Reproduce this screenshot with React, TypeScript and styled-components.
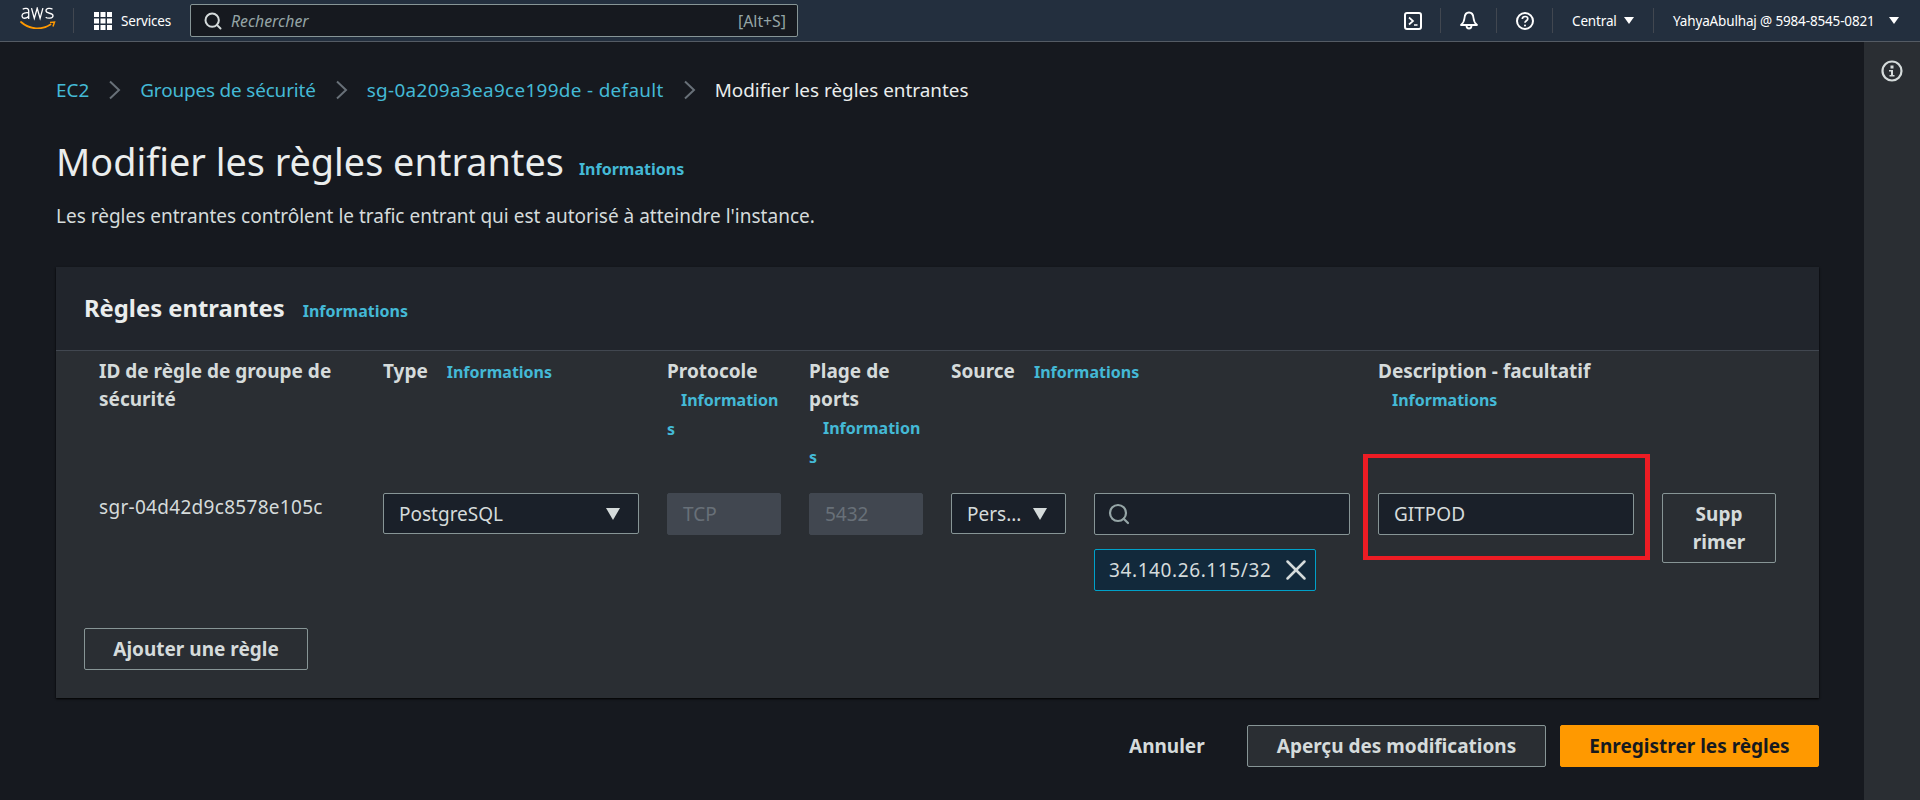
import React from 'react';
import styled, { createGlobalStyle } from 'styled-components';
import { Search, X } from 'lucide-react';

const GlobalStyle = createGlobalStyle`
  html, body {
    margin: 0;
    padding: 0;
    background: #16191f;
    color: #eaeded;
    font-family: "Noto Sans", "Liberation Sans", sans-serif;
  }
  * { box-sizing: border-box; }
`;

//Top navigation
const Nav = styled.header`
  display: flex;
  align-items: center;
  height: 42px;
  background: #232f3e;
  border-bottom: 1px solid #545b64;
  color: #fff;
`;

const LogoSlot = styled.div`
  display: flex;
  align-items: center;
  width: 74px;
  height: 25px;
  padding: 0 0 5px 20px;
  border-right: 1px solid #414750;
`;

const ServicesButton = styled.div`
  display: flex;
  align-items: center;
  gap: 9px;
  width: 116px;
  padding-left: 20px;
  font-size: 13.5px;
  letter-spacing: -0.2px;
`;

const SearchBar = styled.div`
  display: flex;
  align-items: center;
  width: 608px;
  height: 33px;
  padding: 0 11px 0 12px;
  background: #16191f;
  border: 1px solid #879596;
  border-radius: 2px;
  font-size: 15.8px;
  color: #95a5a6;
`;

const SearchHint = styled.span`
  flex: 1;
  margin-left: 8px;
  font-style: italic;
`;

const NavRight = styled.div`
  display: flex;
  align-items: center;
  height: 25px;
  margin-left: auto;
`;

const NavIcon = styled.div`
  display: flex;
  align-items: center;
  justify-content: center;
  width: 56px;
  height: 25px;
  border-right: 1px solid #414750;
`;

const NavMenu = styled.div<{ $width: number }>`
  display: flex;
  align-items: center;
  justify-content: space-between;
  width: ${(p) => p.$width}px;
  height: 25px;
  padding: 0 21px 0 19px;
  font-size: 13.5px;
  letter-spacing: -0.15px;
  white-space: nowrap;
  border-right: ${(p) => (p.$width < 150 ? '1px solid #414750' : 'none')};
`;

const Caret = styled.span`
  width: 0;
  height: 0;
  margin-left: 7px;
  border-left: 5px solid transparent;
  border-right: 5px solid transparent;
  border-top: 7px solid #fff;
`;

//Page shell
const Shell = styled.div`
  display: flex;
  height: 758px;
  overflow: hidden;
`;

const Main = styled.main`
  flex: 1;
  min-width: 0;
  padding: 0 45px 0 56px;
`;

const SidePanel = styled.aside`
  display: flex;
  justify-content: center;
  width: 56px;
  padding-top: 18px;
  background: #2a2e33;
`;

const Breadcrumbs = styled.nav`
  display: flex;
  align-items: center;
  gap: 19px;
  height: 24px;
  margin-top: 36px;
  font-size: 18.9px;
`;

const Crumb = styled.a<{ $current?: boolean; $spacing?: number }>`
  color: ${(p) => (p.$current ? '#eaeded' : '#44b9d6')};
  letter-spacing: ${(p) => p.$spacing ?? 0}px;
  white-space: nowrap;
`;

const TitleRow = styled.div`
  display: flex;
  align-items: center;
  gap: 15px;
  margin-top: 38px;
`;

const Title = styled.h1`
  margin: 0;
  font-size: 37.8px;
  line-height: 44px;
  font-weight: 400;
  color: #eaeded;
`;

const InfoLink = styled.a`
  font-size: 16px;
  font-weight: 700;
  color: #44b9d6;
`;

const TitleInfo = styled(InfoLink)`
  padding-top: 13px;
`;

const Intro = styled.p`
  margin: 20px 0 0;
  font-size: 19px;
  line-height: 25px;
  color: #d5dbdb;
`;

//Rules card
const Card = styled.section`
  height: 431px;
  margin-top: 38px;
  background: #2a2e33;
  box-shadow: 0 1px 2px #000;
`;

const CardHeader = styled.div`
  display: flex;
  align-items: baseline;
  gap: 18px;
  height: 84px;
  padding: 26px 28px 0;
  background: #21252c;
  border-bottom: 1px solid #414750;
`;

const CardTitle = styled.h2`
  margin: 0;
  font-size: 23.8px;
  line-height: 30px;
  font-weight: 700;
  color: #eaeded;
`;

const RulesGrid = styled.div`
  display: grid;
  grid-template-columns: 256px 256px 114px 114px 115px 256px 256px 114px;
  column-gap: 28px;
  padding: 6px 43px 0;
`;

const HeadCell = styled.div<{ $span?: number }>`
  grid-column: span ${(p) => p.$span ?? 1};
  min-height: 113px;
  font-size: 19px;
  line-height: 28px;
  font-weight: 700;
  color: #d5dbdb;
  overflow-wrap: anywhere;
`;

const HeadInfo = styled(InfoLink)`
  margin-left: 14px;
`;

const Cell = styled.div`
  position: relative;
  margin-top: 22px;
`;

const RuleId = styled.div`
  padding-top: 2px;
  font-size: 19px;
  line-height: 24px;
  letter-spacing: 0.3px;
  color: #d5dbdb;
`;

const Field = styled.div<{ $disabled?: boolean; $height?: number }>`
  display: flex;
  align-items: center;
  height: ${(p) => p.$height ?? 42}px;
  padding: 0 18px 0 15px;
  font-size: 19px;
  background: ${(p) => (p.$disabled ? '#414750' : '#1a2029')};
  border: 1px solid ${(p) => (p.$disabled ? '#414750' : '#879596')};
  border-radius: 2px;
  color: ${(p) => (p.$disabled ? '#687078' : '#d5dbdb')};
`;

const SelectText = styled.span`
  flex: 1;
  min-width: 0;
`;

const SelectCaret = styled.span`
  flex: none;
  width: 0;
  height: 0;
  border-left: 7px solid transparent;
  border-right: 7px solid transparent;
  border-top: 12px solid #d5dbdb;
`;

const SearchField = styled(Field)`
  padding-left: 12px;
`;

const Token = styled.div`
  display: flex;
  align-items: center;
  justify-content: space-between;
  width: 222px;
  height: 42px;
  margin-top: 14px;
  padding: 0 2px 0 14px;
  font-size: 19px;
  letter-spacing: 0.6px;
  white-space: nowrap;
  color: #d5dbdb;
  background: #12293b;
  border: 1px solid #00a1c9;
  border-radius: 2px;
`;

const RemoveButton = styled.button`
  display: block;
  width: 114px;
  height: 70px;
  padding: 0 12px;
  font: 700 19px/28px "Noto Sans", sans-serif;
  color: #d5dbdb;
  background: transparent;
  border: 1px solid #879596;
  border-radius: 2px;
`;

const Highlight = styled.div`
  position: absolute;
  top: -39px;
  left: -15px;
  width: 287px;
  height: 106px;
  border-style: solid;
  border-color: #ed1c24;
  border-width: 4px 5px;
  pointer-events: none;
`;

const Button = styled.button<{ $variant?: 'primary' | 'link' }>`
  height: 42px;
  padding: 0;
  font: 700 19px "Noto Sans", sans-serif;
  white-space: nowrap;
  color: ${(p) => (p.$variant === 'primary' ? '#16191f' : '#d5dbdb')};
  background: ${(p) =>
    p.$variant === 'primary' ? '#ff9900' : p.$variant === 'link' ? 'transparent' : '#2a2e33'};
  border: 1px solid
    ${(p) => (p.$variant === 'primary' ? '#ff9900' : p.$variant === 'link' ? 'transparent' : '#879596')};
  border-radius: 2px;
`;

const AddRule = styled(Button)`
  display: block;
  width: 224px;
  margin: 0;
  background: transparent;
`;

const AddRuleRow = styled.div`
  padding: 37px 28px 0;
`;

const Footer = styled.div`
  display: flex;
  justify-content: flex-end;
  align-items: center;
  margin-top: 27px;
`;

const CancelButton = styled(Button)`
  width: 75px;
  margin-right: 44px;
`;

const PreviewButton = styled(Button)`
  width: 299px;
  margin-right: 14px;
`;

const SaveButton = styled(Button)`
  width: 259px;
`;

const AwsLogo = () => (
  <svg width="36" height="22" viewBox="0 0 36 22" fill="none">
    <path d="M2.700 2.200c1.800-1.200 6-1.400 6 1.800V12M8.700 5.800c-3-.3-6.700 0-6.700 3 0 3.400 5 3 6.700.3" stroke="#fff" strokeWidth="1.300" />
    <path d="M11.500 1.200l2.800 10.200 2.900-10.200 2.900 10.200 2.800-10.200" stroke="#fff" strokeWidth="1.300" />
    <path d="M32.500 2.200c-1.500-1.200-6.500-1.500-6.500 1.500 0 3.300 7 1.800 7 5 0 3-5.500 3-7.300 1.500" stroke="#fff" strokeWidth="1.300" />
    <path d="M1 15c9 8 21 8 29.500 2.500" stroke="#f90" strokeWidth="1.800" strokeLinecap="round" />
    <path d="M30 15.500l4.500-.5-1.500 4.500" stroke="#f90" strokeWidth="1.500" />
  </svg>
);

const GridIcon = () => (
  <svg width="18" height="18" viewBox="0 0 18 18" fill="#fff">
    {[0, 6.5, 13].map((y) =>
      [0, 6.5, 13].map((x) => <rect key={`${x}-${y}`} x={x} y={y} width="5" height="5" />),
    )}
  </svg>
);

const TerminalIcon = () => (
  <svg width="18" height="18" viewBox="0 0 18 18" fill="none" stroke="#fff" strokeWidth="2">
    <rect x="1" y="1" width="16" height="16" rx="2" />
    <path d="M5 5.500L9 9l-4 3.500M10 13h3.500" strokeWidth="1.700" />
  </svg>
);

const BellIcon = () => (
  <svg width="18" height="19" viewBox="0 0 18 19" fill="none" stroke="#fff" strokeWidth="1.800">
    <path d="M1 14c2.500-2 3.200-3.500 3.500-7C4.800 3 6.800 1.500 9 1.500S13.200 3 13.500 7c.3 3.500 1 5 3.500 7z" strokeLinejoin="round" />
    <path d="M6.500 14.500c0 4 5 4 5 0" />
  </svg>
);

const HelpIcon = () => (
  <svg width="18" height="18" viewBox="0 0 18 18" fill="none" stroke="#fff" strokeWidth="2">
    <circle cx="9" cy="9" r="8" />
    <path d="M6.300 7c.2-3.400 5.500-3.200 5.500-.2 0 2-2.800 2-2.800 4" strokeWidth="1.700" />
    <circle cx="9" cy="13.400" r="1" fill="#fff" stroke="none" />
  </svg>
);

const InfoIcon = () => (
  <svg width="22" height="22" viewBox="0 0 22 22" fill="none">
    <circle cx="11" cy="11" r="9.500" stroke="#d5dbdb" strokeWidth="2.200" />
    <rect x="9.500" y="5.500" width="3" height="3" fill="#d5dbdb" />
    <path d="M8 10h4v5h1.500v1.500h-5V15H10v-3.500H8z" fill="#d5dbdb" />
  </svg>
);

const CrumbChevron = () => (
  <svg width="13" height="20" viewBox="0 0 13 20" fill="none" stroke="#687078" strokeWidth="2">
    <path d="M2 1.500l9 8.500-9 8.500" />
  </svg>
);

const crumbs = [
  { label: 'EC2', spacing: 0 },
  { label: 'Groupes de sécurité', spacing: -0.15 },
  { label: 'sg-0a209a3ea9ce199de - default', spacing: 0.33 },
];

const App = () => {
  return (
    <>
      <GlobalStyle />

      <Nav>
        <LogoSlot>
          <AwsLogo />
        </LogoSlot>
        <ServicesButton>
          <GridIcon />
          Services
        </ServicesButton>
        <SearchBar>
          <Search size={20} color="#d5dbdb" strokeWidth={2.4} />
          <SearchHint>Rechercher</SearchHint>
          <span>[Alt+S]</span>
        </SearchBar>
        <NavRight>
          <NavIcon>
            <TerminalIcon />
          </NavIcon>
          <NavIcon>
            <BellIcon />
          </NavIcon>
          <NavIcon>
            <HelpIcon />
          </NavIcon>
          <NavMenu $width={101}>
            Central
            <Caret />
          </NavMenu>
          <NavMenu $width={266}>
            YahyaAbulhaj @ 5984-8545-0821
            <Caret />
          </NavMenu>
        </NavRight>
      </Nav>

      <Shell>
        <Main>
          <Breadcrumbs>
            {crumbs.map((crumb) => (
              <React.Fragment key={crumb.label}>
                <Crumb $spacing={crumb.spacing}>{crumb.label}</Crumb>
                <CrumbChevron />
              </React.Fragment>
            ))}
            <Crumb $current>Modifier les règles entrantes</Crumb>
          </Breadcrumbs>

          <TitleRow>
            <Title>Modifier les règles entrantes</Title>
            <TitleInfo>Informations</TitleInfo>
          </TitleRow>
          <Intro>
            Les règles entrantes contrôlent le trafic entrant qui est autorisé à atteindre
            l'instance.
          </Intro>

          <Card>
            <CardHeader>
              <CardTitle>Règles entrantes</CardTitle>
              <InfoLink>Informations</InfoLink>
            </CardHeader>

            <RulesGrid>
              <HeadCell>ID de règle de groupe de sécurité</HeadCell>
              <HeadCell>
                Type <HeadInfo>Informations</HeadInfo>
              </HeadCell>
              <HeadCell>
                Protocole <HeadInfo>Informations</HeadInfo>
              </HeadCell>
              <HeadCell>
                Plage de ports <HeadInfo>Informations</HeadInfo>
              </HeadCell>
              <HeadCell $span={2}>
                Source <HeadInfo>Informations</HeadInfo>
              </HeadCell>
              <HeadCell>
                Description - facultatif <HeadInfo>Informations</HeadInfo>
              </HeadCell>
              <HeadCell />

              <Cell>
                <RuleId>sgr-04d42d9c8578e105c</RuleId>
              </Cell>
              <Cell>
                <Field $height={41}>
                  <SelectText>PostgreSQL</SelectText>
                  <SelectCaret />
                </Field>
              </Cell>
              <Cell>
                <Field $disabled>TCP</Field>
              </Cell>
              <Cell>
                <Field $disabled>5432</Field>
              </Cell>
              <Cell>
                <Field $height={41}>
                  <SelectText>Pers...</SelectText>
                  <SelectCaret />
                </Field>
              </Cell>
              <Cell>
                <SearchField>
                  <Search size={24} color="#95a5a6" strokeWidth={2.2} />
                </SearchField>
                <Token>
                  34.140.26.115/32
                  <X size={34} color="#d5dbdb" strokeWidth={1.8} />
                </Token>
              </Cell>
              <Cell>
                <Field>GITPOD</Field>
                <Highlight />
              </Cell>
              <Cell>
                <RemoveButton>
                  Supp
                  <wbr />
                  rimer
                </RemoveButton>
              </Cell>
            </RulesGrid>

            <AddRuleRow>
              <AddRule>Ajouter une règle</AddRule>
            </AddRuleRow>
          </Card>

          <Footer>
            <CancelButton $variant="link">Annuler</CancelButton>
            <PreviewButton>Aperçu des modifications</PreviewButton>
            <SaveButton $variant="primary">Enregistrer les règles</SaveButton>
          </Footer>
        </Main>

        <SidePanel>
          <InfoIcon />
        </SidePanel>
      </Shell>
    </>
  );
};

export default App;
